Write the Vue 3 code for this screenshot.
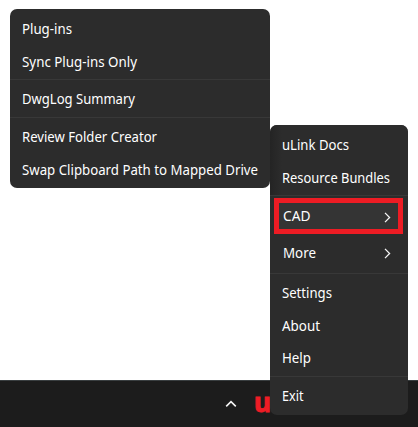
<script setup>
const toolMenu = [
  [{ label: 'Plug-ins', w: 50 }, { label: 'Sync Plug-ins Only', w: 115 }],
  [{ label: 'DwgLog Summary', w: 113 }],
  [{ label: 'Review Folder Creator', w: 135 }, { label: 'Swap Clipboard Path to Mapped Drive', w: 236 }]
]
const mainMenu = [
  { name: 'links', items: [{ label: 'uLink Docs', w: 67 }, { label: 'Resource Bundles', w: 108 }] },
  { name: 'more', items: [{ label: 'CAD', w: 27.5, sub: true, active: true }, { label: 'More', w: 33, sub: true }] },
  { name: 'app', items: [{ label: 'Settings', w: 50 }, { label: 'About', w: 38 }, { label: 'Help', w: 29 }] },
  { name: 'exit', items: [{ label: 'Exit', w: 21.5 }] }
]
</script>

<template>
  <div class="desktop">
    <div class="wallpaper"></div>
    <footer class="taskbar">
      <svg class="chevron-up" width="12" height="8" viewBox="0 0 12 8">
        <path d="M1.2 6.4 6 1.6l4.8 4.8" />
      </svg>
      <span class="logo">u</span>
    </footer>

    <nav class="menu tools">
      <div v-for="(group, g) in toolMenu" :key="g" class="group">
        <div v-for="item in group" :key="item.label" class="item">
          <svg class="label" width="240" height="20">
            <text x="0" y="15" :textLength="item.w" lengthAdjust="spacingAndGlyphs">{{ item.label }}</text>
          </svg>
        </div>
      </div>
    </nav>

    <nav class="menu main">
      <div v-for="group in mainMenu" :key="group.name" class="group" :class="group.name">
        <div v-for="item in group.items" :key="item.label" class="item" :class="{ active: item.active, sub: item.sub }">
          <svg class="label" width="110" height="20">
            <text x="0" y="15" :textLength="item.w" lengthAdjust="spacingAndGlyphs">{{ item.label }}</text>
          </svg>
          <svg v-if="item.sub" class="arrow" width="7" height="11" viewBox="0 0 7 11">
            <path d="M1 .9 5.6 5.5 1 10.1" />
          </svg>
        </div>
      </div>
    </nav>
  </div>
</template>

<style>
body { margin: 0; background: #fff; }
</style>

<style scoped>
.desktop {
  position: relative;
  display: flex;
  flex-direction: column;
  width: 418px;
  height: 427px;
  overflow: hidden;
  background: #fff;
  font-family: "Noto Sans", "Open Sans", sans-serif;
}
.wallpaper { flex: 1; }
.taskbar {
  box-sizing: border-box;
  display: flex;
  align-items: center;
  height: 47px;
  padding-left: 225px;
  border-top: 1px solid #393e40;
  background: #1c1c1c;
}
.chevron-up { fill: none; stroke: #f4f4f4; stroke-width: 1.6; }
.logo {
  margin: -4px 0 0 17px;
  color: #ee1c25;
  font: 700 26px/32px "Noto Sans", sans-serif;
  -webkit-text-stroke: .9px #ee1c25;
}
.menu {
  position: absolute;
  box-sizing: border-box;
  background: #2c2c2c;
  border-radius: 7px;
}
.tools { left: 10px; top: 9px; width: 260px; height: 179px; }
.main {
  left: 270px;
  top: 125px;
  width: 138px;
  height: 290px;
  overflow: hidden;
}
.group { box-sizing: border-box; padding: 4px 0 0; }
.group + .group { padding: 3px 0 1px; border-top: 1px solid #383838; }
.item {
  box-sizing: border-box;
  display: flex;
  align-items: flex-start;
  height: 33px;
  padding: 6px 0 0 12px;
}
.label { flex: none; display: block; overflow: visible; }
.label text { fill: #fff; font-size: 14px; }
.links {
  height: 70px;
  background: linear-gradient(90deg, #242424, #2c2c2c 12px);
}
.group + .more { height: 78px; padding-top: 2px; }
.more .item { height: 38px; padding: 9px 0 0 13px; }
.more .item.active {
  width: 129px;
  height: 36px;
  margin-left: 4px;
  padding: 3px 0 0 4px;
  border: 5px solid #ed1c24;
  background: #343434;
}
.sub .label { width: 101px; }
.arrow { margin-top: 6px; fill: none; stroke: #f4f4f4; stroke-width: 1.3; }
.sub:not(.active) .arrow { margin-top: 5px; }
.group.app { height: 103px; }
.app .item:last-child { padding-top: 5px; }
</style>
